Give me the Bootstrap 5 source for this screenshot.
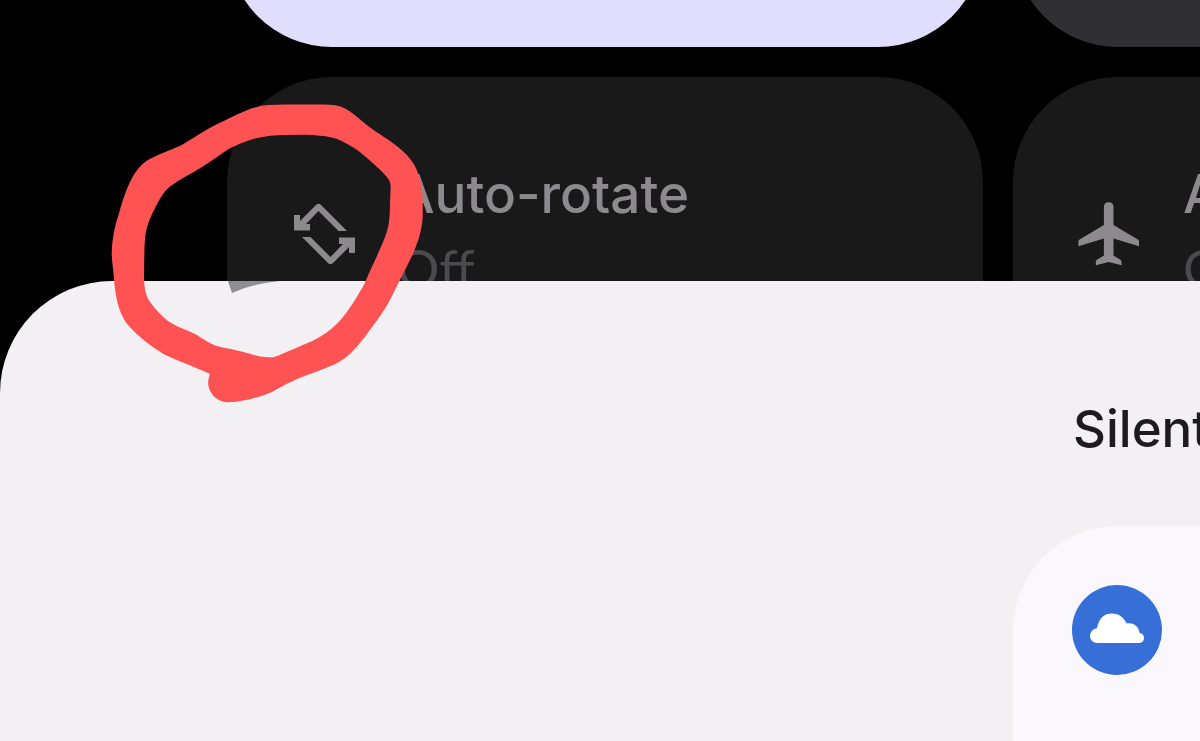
<!DOCTYPE html>
<html lang="en">
<head>
<meta charset="utf-8">
<meta name="viewport" content="width=device-width, initial-scale=1">
<title>Quick settings</title>
<link href="https://cdn.jsdelivr.net/npm/bootstrap@5.3.0/dist/css/bootstrap.min.css" rel="stylesheet">
<style>
  body { background: #000; font-family: Inter, "Open Sans", sans-serif; overflow: hidden; }
  .quick-panel { padding-left: 227px; gap: 30px; margin-top: -267px; }
  .tile-row { gap: 30px; }
  .tile { flex: 0 0 63vw; height: 314px; border: 0; border-radius: 105px; padding: 0 60px; gap: 38px; background: #19191a; color: #8c8a8d; white-space: nowrap; }
  .tile-on { background: #e0defc; }
  .tile-idle { background: #303032; }
  .tile-label { font-size: 53px; line-height: 72px; font-weight: 500; }
  .tile-state { font-family: Lato, "Open Sans", sans-serif; font-size: 53px; line-height: 76px; color: #4b4a4d; }
  .shade { background: #f2f0f3; border-top-left-radius: 112px; margin-top: -110px; min-height: 460px; padding-top: 112px; }
  .shade-section { margin-left: 1013px; }
  .shade-title { font-size: 51px; line-height: 72px; font-weight: 500; color: #1c1b1f; padding-left: 60px; margin-bottom: 61px; }
  .notice { background: #faf8fd; border-top-left-radius: 105px; min-height: 215px; padding: 59px; }
  .scribble { left: 100px; top: 90px; z-index: 3; pointer-events: none; }
</style>
</head>
<body>
<main class="position-relative vh-100 overflow-hidden">
  <section class="quick-panel d-flex flex-column" aria-label="Quick settings">
    <div class="tile-row d-flex">
      <button type="button" class="tile tile-on" aria-label="Active tile"></button>
      <button type="button" class="tile tile-idle" aria-label="Inactive tile"></button>
    </div>
    <div class="tile-row d-flex">
      <button type="button" class="tile d-flex align-items-center text-start">
        <svg class="flex-shrink-0" width="72" height="72" viewBox="0 0 72 72" fill="currentColor" aria-hidden="true">
          <defs><path id="turn" d="M6 17h6v6L28 7q2.500-2.600 5 0L59 33h-8.500L30.500 13 18 26h4v6.500H6z"/></defs>
          <use href="#turn" x="1"/><use href="#turn" x="-1" transform="rotate(180 36.500 36)"/>
        </svg>
        <span class="d-flex flex-column pb-1"><span class="tile-label">Auto-rotate</span><span class="tile-state">Off</span></span>
      </button>
      <button type="button" class="tile d-flex align-items-center text-start">
        <svg class="flex-shrink-0" width="72" height="72" viewBox="0 0 24 24" fill="currentColor" aria-hidden="true">
          <path d="M22 16.100v-1.700q0-.4-.4-.6L13.500 9V3q0-1.600-1.600-1.600T10.300 3v6l-8.100 4.800q-.4.200-.4.600v1.700l8.500-2.600v5.700l-2.300 1.400q-.4.300-.4.800v1l4.300-1.100 4.300 1.100v-1q0-.5-.4-.8l-2.300-1.400v-5.700z"/>
        </svg>
        <span class="d-flex flex-column pb-1"><span class="tile-label">Airplane mode</span><span class="tile-state">Off</span></span>
      </button>
    </div>
  </section>

  <section class="shade position-relative" aria-label="Notifications">
    <div class="shade-section">
      <h1 class="shade-title">Silent</h1>
      <article class="notice">
        <svg width="90" height="90" viewBox="0 0 90 90" role="img" aria-label="Cloud">
          <circle cx="45" cy="45" r="45" fill="#366fd8"/>
          <path fill="#fff" d="M26 58a7 7 0 0 1-8-7q0-6 7-8C27 33 32 28.500 40 28.500c7 0 12 4 14.500 10C62 37 67 42 67.500 48q4.500 .5 4.500 5t-5 5z"/>
        </svg>
      </article>
    </div>
  </section>

  <svg class="scribble position-absolute" width="340" height="320" viewBox="0 0 1020 960" aria-hidden="true">
    <path fill="#8e8d92" d="M384 573L396 609Q460 580 540 573z"/>
    <path fill="#ff5353" fill-rule="evenodd" d="M505 45C570 43 640 44 690 44C735 44 765 75 800 105C840 135 870 151 895 172C940 208 954 240 963 280C970 320 968 350 968 385C964 430 950 470 930 510L880 610C860 655 825 700 795 740C755 790 735 810 690 829C650 846 620 855 580 872C550 885 525 903 495 914C465 924 430 935 385 937C350 938 320 905 325 870L329 851C285 832 240 815 190 792C155 770 120 745 90 712C60 680 50 635 44 590C42 550 36 520 35 490C36 450 43 410 57 370C68 330 78 300 93 270C110 235 135 212 160 202C195 185 220 177 245 165C280 145 315 120 350 103C385 87 420 68 450 57Q480 46 505 45z
      M385 178C430 155 460 144 510 137Q555 134 610 134C645 135 675 136 710 146C735 157 755 168 775 182C800 203 820 220 835 235C855 254 873 270 872 290L870 340C870 375 868 400 862 420C855 448 840 475 830 500C815 530 803 560 788 592C765 630 740 674 710 702C665 745 630 756 590 773C560 785 545 793 520 802C480 802 465 795 430 786C400 778 375 774 350 768C320 758 305 742 280 730C255 718 235 712 215 700C185 682 160 650 148 633C134 610 133 585 132 560L133 500Q133 460 137 430C143 400 155 373 165 355C182 322 190 305 213 287C240 268 265 256 295 238C325 219 355 198 385 178z"/>
  </svg>
</main>
<script src="https://cdn.jsdelivr.net/npm/bootstrap@5.3.0/dist/js/bootstrap.bundle.min.js"></script>
</body>
</html>
